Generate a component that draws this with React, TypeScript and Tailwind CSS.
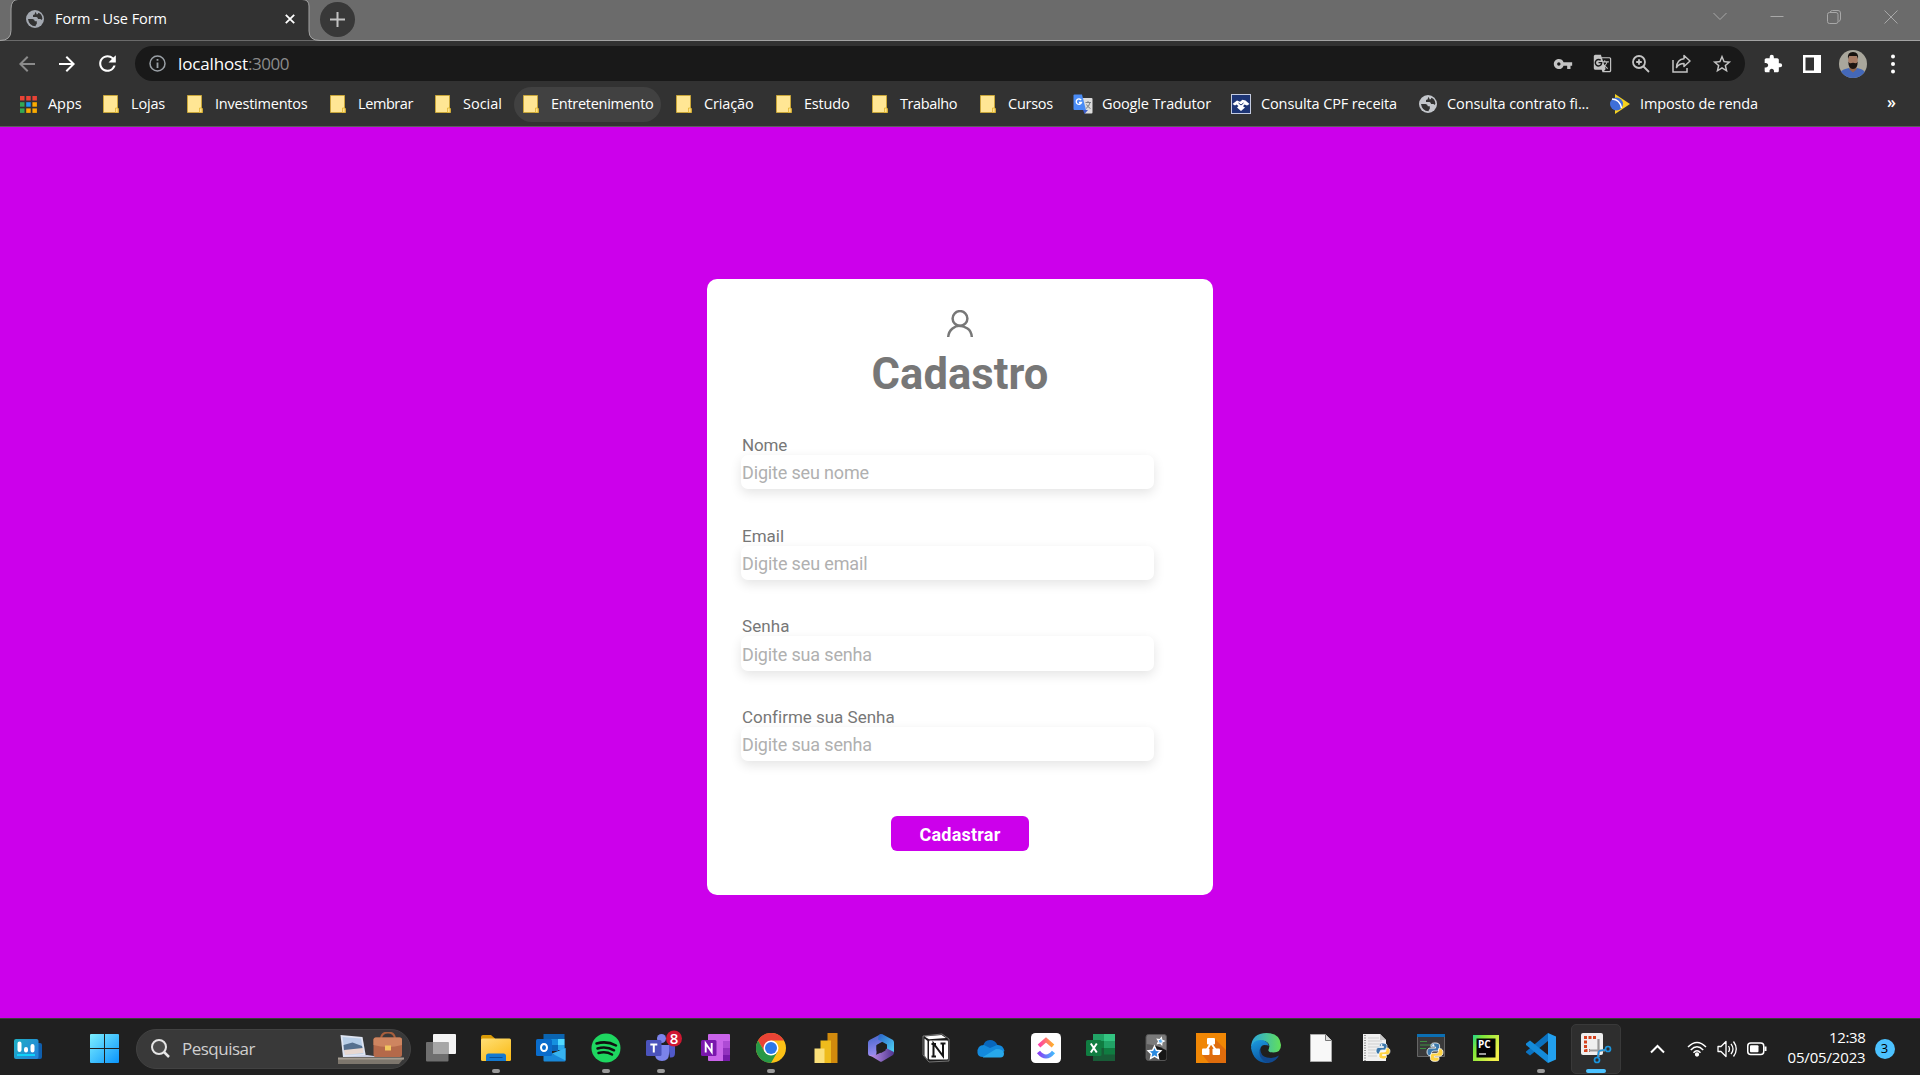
import React, { useLayoutEffect, useRef } from "react";
import { MdVpnKey, MdGTranslate, MdStarBorder, MdExtension, MdArrowBack, MdArrowForward, MdRefresh } from "react-icons/md";

/* Text whose tracking is adjusted so that the run takes the given width. */
function Fit({ w, className = "", children }: { w: number; className?: string; children: string }) {
  const ref = useRef<HTMLSpanElement>(null);
  useLayoutEffect(() => {
    const el = ref.current;
    if (!el) return;
    el.style.letterSpacing = "0px";
    const natural = el.getBoundingClientRect().width;
    el.style.letterSpacing = `${(w - natural) / children.length}px`;
  }, [w, children]);
  return (
    <span ref={ref} className={`inline-block shrink-0 whitespace-pre ${className}`}>
      {children}
    </span>
  );
}

const Folder = () => (
  <svg width="16" height="18" viewBox="0 0 16 18">
    <path d="M.5.5h14v12.500l1 1v3.500H.5z" fill="#ffe694" stroke="#c9a63a" />
    <path d="M12.500 17.500v-4.500h2.500v4.500z" fill="#ffe28a" stroke="#e0b52f" strokeWidth=".8" />
  </svg>
);

const AppsIcon = () => (
  <svg width="17" height="17" viewBox="0 0 17 17">
    {["#ea4335", "#ea4335", "#ea4335", "#34a853", "#2196f3", "#fbab00", "#34a853", "#fbab00", "#fbab00"].map((c, i) => (
      <rect key={i} x={(i % 3) * 6.2} y={Math.floor(i / 3) * 6.2} width="4.500" height="4.500" fill={c} />
    ))}
  </svg>
);

const Globe = ({ color }: { color: string }) => (
  <svg width="18" height="18" viewBox="0 0 18 18">
    <circle cx="9" cy="9" r="9" fill={color} />
    <path d="M2 9h4.500q2.300.3 2.300 2.300h2V14q-1 .4-1.300 2.200Q3 16 2 9z" fill="#323232" />
    <path d="M9.800 2q-1.300 1-1 2.200l-1.800.8v2h3.500q1.500.3 1.500 2h2.200q.8 0 1.300 1l.9-1.200Q16 4 12.300 2.800q0 1.700-1.600 1.700z" fill="#323232" />
  </svg>
);

const TranslateIcon = () => (
  <svg width="20" height="20" viewBox="0 0 20 20">
    <path d="M8 4h10.500q1 0 1 1v13.500q0 1-1 1H12z" fill="#dcdcdc" />
    <path d="M10 16h5l-3.500 4z" fill="#3a5bc7" />
    <path d="M1.500.5h7.500l4 15.500H1.500q-1 0-1-1v-13.500q0-1 1-1z" fill="#4a8cf6" />
    <path d="M8.200 6.200a2.700 2.700 0 1 0 .3 2.300H6" stroke="#fff" strokeWidth="1.300" fill="none" />
    <path d="M12.500 8.500h5.500M15 7v1.500M17 8.500q-.8 4-4 6M13.500 10.500q1.500 3 4 4" stroke="#7a7f86" fill="none" />
  </svg>
);

const ReceitaIcon = () => (
  <svg width="20" height="20" viewBox="0 0 20 20">
    <rect x=".5" y=".5" width="19" height="19" fill="#1d3575" stroke="#c3cbe0" />
    <path d="M1.500 10 6 6.500l3 1.200 2.500-1.900 3 .7L18.500 10 16 11.500l-2.500-1-1.500 1.800 2 1.200-4 3.500-4-3.500 1.500-1.500-2-1.500-1.500 1z" fill="#fff" />
    <path d="m7.500 9 2.500 2L12.500 9" stroke="#1d3575" fill="none" />
  </svg>
);

const ImpostoIcon = () => (
  <svg width="20" height="20" viewBox="0 0 20 20">
    <path d="M5 0 20 10 5 20z" fill="#f7d21e" />
    <circle cx="6.500" cy="10" r="6.500" fill="#3f6fd8" />
    <path d="M2 5q8 .5 9.500 9" stroke="#fff" strokeWidth="1.500" fill="none" />
  </svg>
);

const bookmarks: { t: string; w: number; cls: string; slot: string; icon: React.ReactNode }[] = [
  { t: "Apps", w: 33.5, cls: "w-[83px]", slot: "w-7", icon: <AppsIcon /> },
  { t: "Lojas", w: 34, cls: "w-[84px]", slot: "w-7", icon: <Folder /> },
  { t: "Investimentos", w: 92.5, cls: "w-[143px]", slot: "w-7", icon: <Folder /> },
  { t: "Lembrar", w: 55, cls: "w-[105px]", slot: "w-7", icon: <Folder /> },
  { t: "Social", w: 39, cls: "w-[88px]", slot: "w-7", icon: <Folder /> },
  { t: "Entretenimento", w: 102.5, cls: "w-[153px]", slot: "w-7", icon: <Folder /> },
  { t: "Criação", w: 49.5, cls: "w-[100px]", slot: "w-7", icon: <Folder /> },
  { t: "Estudo", w: 45.5, cls: "w-[96px]", slot: "w-7", icon: <Folder /> },
  { t: "Trabalho", w: 57, cls: "w-[108px]", slot: "w-7", icon: <Folder /> },
  { t: "Cursos", w: 45, cls: "w-[93px]", slot: "w-7", icon: <Folder /> },
  { t: "Google Tradutor", w: 109, cls: "w-[158px]", slot: "w-[29px]", icon: <TranslateIcon /> },
  { t: "Consulta CPF receita", w: 136, cls: "w-[188px]", slot: "w-[30px]", icon: <ReceitaIcon /> },
  { t: "Consulta contrato fi...", w: 142, cls: "w-[191px]", slot: "w-[28px]", icon: <Globe color="#c4c7cc" /> },
  { t: "Imposto de renda", w: 118, cls: "w-[277px]", slot: "w-[30px]", icon: <ImpostoIcon /> },
];

function TabStrip() {
  return (
    <div className="flex h-[41px] shrink-0 items-start justify-between bg-[#6b6b6b] shadow-[inset_0_-1px_0_#a3a3a3]">
      <div className="flex">
        <svg width="320" height="41" viewBox="0 0 320 41" className="-mr-[320px]">
          <path d="M0 41v-.5q11 0 11-10V9Q11-.5 18-.5H302Q309-.5 309 6V31q0 9.500 11 9.500v.5z" fill="#323232" stroke="#a3a3a3" />
        </svg>
        <div className="relative flex h-[38px] w-[319px] items-center pl-[26px]">
          <Globe color="#a3a8b0" />
          <Fit w={112} className="ml-[11px] text-[14.500px] text-white">Form - Use Form</Fit>
          <svg width="10" height="10" viewBox="0 0 10 10" className="ml-[118px]">
            <path d="m.8.8 8.400 8.400M9.200.8.8 9.200" stroke="#fff" strokeWidth="1.800" />
          </svg>
        </div>
        <div className="mt-[2px] ml-[1px] flex size-[35px] items-center justify-center rounded-full bg-[#383838]">
          <svg width="15" height="15" viewBox="0 0 15 15">
            <path d="M7.500 0v15M0 7.500h15" stroke="#c2c2c2" strokeWidth="2" />
          </svg>
        </div>
      </div>
      <div className="flex items-center gap-[43px] pt-[10px] pr-[22px]">
        <svg width="14" height="14" viewBox="0 0 14 14"><path d="m.5 3 6.500 6.500L13.500 3" stroke="#a8a8a8" fill="none" /></svg>
        <svg width="14" height="14" viewBox="0 0 14 14"><path d="M.5 6.500h13" stroke="#a8a8a8" /></svg>
        <svg width="14" height="14" viewBox="0 0 14 14" fill="none" stroke="#a8a8a8">
          <rect x=".5" y="2.500" width="10.500" height="11" rx="2" />
          <path d="M3 2.500Q3.500.5 5.500.5H11q2.500 0 2.500 2.500v6q0 2-2 2.500" />
        </svg>
        <svg width="14" height="14" viewBox="0 0 14 14"><path d="m.5.5 13 13M13.500.5l-13 13" stroke="#a8a8a8" /></svg>
      </div>
    </div>
  );
}

function Toolbar() {
  return (
    <div className="flex h-[45px] shrink-0 items-center bg-[#323232]">
      <div className="flex w-[135px] items-center gap-[16px] pl-[15px]">
        <MdArrowBack size={24} color="#8b8b8b" />
        <MdArrowForward size={24} color="#fff" />
        <MdRefresh size={25} color="#fff" />
      </div>
      <div className="flex h-[35px] w-[1610px] items-center rounded-full bg-[#191919] pl-[14px]">
        <svg width="17" height="17" viewBox="0 0 17 17" fill="none" stroke="#9aa0a6" strokeWidth="1.500">
          <circle cx="8.500" cy="8.500" r="7.500" />
          <path d="M8.500 7.500V13M8.500 4v1.800" strokeWidth="1.800" />
        </svg>
        <Fit w={70} className="ml-[12px] text-[17px] text-white">localhost</Fit>
        <Fit w={41} className="text-[17px] text-[#8b8b8b]">:3000</Fit>
        <div className="ml-auto flex items-center gap-[20px] pr-[12px] text-[#c4c4c4]">
          <MdVpnKey size={20} />
          <MdGTranslate size={19} />
          <svg width="18" height="18" viewBox="0 0 18 18" fill="none" stroke="currentColor" strokeWidth="1.800">
            <circle cx="7" cy="7" r="6" />
            <path d="m11.500 11.500 5.500 5.500M7 4.200v5.600M4.200 7h5.600" />
          </svg>
          <svg width="19" height="19" viewBox="0 0 19 19" fill="none" stroke="currentColor" strokeWidth="1.500" className="ml-[2px]">
            <path d="M1 6v12h14v-4" />
            <path d="M12 1.500 18 7l-6 5.500V9.500q-5 0-7.500 4Q5 5.500 12 4.800z" strokeLinejoin="round" />
          </svg>
          <MdStarBorder size={22} />
        </div>
      </div>
      <div className="flex items-center pl-[18px]">
        <MdExtension size={20} color="#fff" />
        <svg width="18" height="18" viewBox="0 0 18 18" className="ml-[20px]">
          <path d="M0 0h18v18H0zM2.500 2.500v13h8.500v-13z" fill="#fff" fillRule="evenodd" />
        </svg>
        <svg width="28" height="28" viewBox="0 0 28 28" className="ml-[18px]">
          <clipPath id="avatar"><circle cx="14" cy="14" r="14" /></clipPath>
          <g clipPath="url(#avatar)">
            <rect width="28" height="28" fill="#a9a79c" />
            <path d="M1 28V22q3-3 9-4l4 4 4-4q6 1 8 4v6z" fill="#4468b8" />
            <path d="M10.500 14h7v5.500l-3.500 3-3.500-3z" fill="#8e6650" />
            <ellipse cx="14" cy="10" rx="4.800" ry="6.500" fill="#a67a63" />
            <path d="M9 9q-1-7 5-7t5 7l-1.200-3h-7.600z" fill="#17120f" />
            <path d="M9.300 11.500q.7 2 2.200 1.700 2.500-1 5 0 1.500.3 2.200-1.700 0 7.500-4.700 7.500t-4.700-7.500z" fill="#1d1512" />
          </g>
        </svg>
        <svg width="4" height="20" viewBox="0 0 4 20" className="ml-[24px]" fill="#fff">
          <circle cx="2" cy="2.500" r="2" /><circle cx="2" cy="10" r="2" /><circle cx="2" cy="17.500" r="2" />
        </svg>
      </div>
    </div>
  );
}

function BookmarksBar() {
  return (
    <div className="flex h-[41px] shrink-0 items-center border-b border-[#5c5c5c] bg-[#323232] pb-[4px] pl-[20px] text-[14.500px] text-white">
      {bookmarks.map((b) => (
        <div key={b.t} className={`relative flex h-[35px] shrink-0 items-center ${b.cls}`}>
          {b.t === "Entretenimento" && <div className="absolute inset-y-0 -left-[9px] w-[147px] rounded-full bg-[#414141]" />}
          <div className={`relative shrink-0 ${b.slot}`}>{b.icon}</div>
          <Fit w={b.w} className="relative">{b.t}</Fit>
        </div>
      ))}
      <span className="-mt-[4px] text-[16px] font-semibold">»</span>
    </div>
  );
}

const fields = [
  ["Nome", 45, "Digite seu nome", 127],
  ["Email", 42, "Digite seu email", 125.5],
  ["Senha", 47.5, "Digite sua senha", 130],
  ["Confirme sua Senha", 152, "Digite sua senha", 130],
] as const;

function FormCard() {
  return (
    <main className="flex h-[891px] shrink-0 justify-center bg-[#cc00eb] pt-[152px]">
      <form className="flex h-[616px] w-[506px] flex-col items-center rounded-[10px] bg-white pt-[31px] font-['Roboto',sans-serif]">
        <svg width="28" height="28" viewBox="0 0 28 28" fill="none" stroke="#777" strokeWidth="2.500">
          <circle cx="14" cy="8.500" r="7.400" />
          <path d="M2.200 27q.5-5.500 4.300-8.500T14 15.800t7.500 2.700 4.300 8.500" />
        </svg>
        <h1 className="mt-[11px] h-[51px] text-[43.500px] leading-[51px] font-bold text-[#777]"><Fit w={177}>Cadastro</Fit></h1>
        <div className="mt-[34px] flex w-full flex-col pl-[34px]">
          {fields.map(([label, lw, ph, pw]) => (
            <div key={label} className="flex h-[90.700px] flex-col">
              <label className="h-[21px] pl-[1px] text-[17px] leading-[22px] text-[#777]"><Fit w={lw}>{label}</Fit></label>
              <div className="flex h-[34.300px] w-[413px] items-center rounded-[7px] bg-white pt-[1px] pl-[1px] text-[18px] text-[#b0b0b0] shadow-[0_4px_12px_rgba(0,0,0,0.11)]">
                <Fit w={pw}>{ph}</Fit>
              </div>
            </div>
          ))}
        </div>
        <button type="button" className="mt-[19px] flex h-[35px] w-[138px] items-center justify-center rounded-[6px] bg-[#cc00eb] pt-[2px] text-[18px] font-bold text-white">
          <Fit w={81}>Cadastrar</Fit>
        </button>
      </form>
    </main>
  );
}

const Explorer = () => (
  <svg width="30" height="30" viewBox="0 0 30 30">
    <path d="M0 4q0-2 2-2h8l4 3.500v5H0z" fill="#d99a06" />
    <rect y="5.500" width="30" height="22.500" rx="1.500" fill="url(#fold)" />
    <path d="M5 28v-5q0-2.500 2.500-2.500h15q2.500 0 2.500 2.500v5z" fill="#1479d0" />
    <path d="M8.500 24.500h13" stroke="#0a4f94" />
    <defs><linearGradient id="fold" x2=".7" y2="1"><stop stopColor="#ffdf75" /><stop offset="1" stopColor="#fbbd1c" /></linearGradient></defs>
  </svg>
);
const Outlook = () => (
  <svg width="30" height="30" viewBox="0 0 30 30">
    <path d="M7.500 1h21v16h-21z" fill="#0a64b0" />
    <path d="M15 6h7v6h-7z" fill="#1490df" /><path d="M22 6h6.500v6H22z" fill="#50d9ff" /><path d="M15 12h7v6h-7z" fill="#0a64b8" /><path d="M22 12h6.500v5H22z" fill="#28a8ea" />
    <path d="M7.500 15 18 21.500 29.500 15v12.500q0 1-1 1h-20q-1 0-1-1z" fill="#1988d9" />
    <path d="M29.500 15v12.500L16 20.500z" fill="#36b3f0" />
    <rect x="0" y="6" width="16" height="17" rx="1.500" fill="#0a6ccb" />
    <ellipse cx="8" cy="14.500" rx="3" ry="3.600" fill="none" stroke="#fff" strokeWidth="2" />
  </svg>
);
const Spotify = () => (
  <svg width="30" height="30" viewBox="0 0 30 30">
    <circle cx="15" cy="15" r="14.500" fill="#1ed760" />
    <path d="M5.500 10.500q10.500-3 19.500 2M6.500 15.500q9-2.500 16.500 1.800M7.500 20q7.500-2 13.500 1.500" stroke="#111" strokeWidth="2.500" strokeLinecap="round" fill="none" />
  </svg>
);
const Teams = () => (
  <svg width="36" height="32" viewBox="-3 -1 36 32" className="overflow-visible">
    <circle cx="15.500" cy="5.500" r="4.500" fill="#7b83eb" />
    <path d="M22 12h7v8q0 5-5 4.500z" fill="#5059c9" />
    <path d="M9 12h14v9q0 7-7 7t-7-7z" fill="#7b83eb" />
    <rect y="7" width="15.500" height="16" rx="1.500" fill="#4b53bc" />
    <path d="M4.300 11.500h7M7.800 11.500v8" stroke="#fff" strokeWidth="2" />
    <circle cx="28" cy="5.500" r="8" fill="#cf1732" />
    <text x="28" y="11" textAnchor="middle" fontSize="15" fontWeight="600" fill="#fff" fontFamily="Open Sans, sans-serif">8</text>
  </svg>
);
const OneNote = () => (
  <svg width="30" height="30" viewBox="0 0 30 30">
    <rect x="7" y="1" width="22" height="27" rx="1" fill="#ca64ea" />
    <path d="M22 8h7v7h-7z" fill="#ae4bd5" /><path d="M22 15h7v6.500h-7z" fill="#9332bf" /><path d="M22 21.500h7V28h-7z" fill="#7719aa" />
    <rect y="7" width="15.500" height="16" rx="1.500" fill="#7a17ad" />
    <path d="M4.700 19.500v-9l6 8.500v-9" stroke="#fff" strokeWidth="1.900" fill="none" />
  </svg>
);
const Chrome = () => (
  <svg width="30" height="30" viewBox="0 0 30 30">
    <circle cx="15" cy="15" r="15" fill="#fbc116" />
    <path d="M2 7.500A15 15 0 0 1 28 7.500H15L8.500 18.700z" fill="#ea4335" />
    <path d="M2 7.500 8.500 18.700Q12 23 21.500 18.700L15 30A15 15 0 0 1 2 7.500z" fill="#279847" />
    <circle cx="15" cy="15" r="7.500" fill="#fff" /><circle cx="15" cy="15" r="6" fill="#2b78ea" />
  </svg>
);
const PowerBI = () => (
  <svg width="30" height="30" viewBox="0 0 30 30">
    <path d="M16.500 0h10v30h-10z" fill="#d18a0d" /><path d="M9.500 7.500h10.500V30H9.500z" fill="#eebb1c" /><path d="M3.500 15.500h10V30h-10z" fill="#fbe07a" />
  </svg>
);
const M365 = () => (
  <svg width="30" height="30" viewBox="0 0 30 30">
    <defs>
      <linearGradient id="m1" x2=".2" y2="1"><stop stopColor="#3f63c9" /><stop offset="1" stopColor="#9a8cf0" /></linearGradient>
      <linearGradient id="m2" x2="1" y2="1"><stop stopColor="#2a5fc8" /><stop offset="1" stopColor="#50d8f5" /></linearGradient>
      <linearGradient id="m3" x2="1" y2="0"><stop stopColor="#c79af2" /><stop offset="1" stopColor="#4f358f" /></linearGradient>
    </defs>
    <path d="M15 1 3.500 7Q2 8 2 9.500v11q0 2 2 2.500 6 1 6.500-3V12l8-4.500z" fill="url(#m1)" />
    <path d="M13 1.800 16 1l11 6q1 1 1 2.500V20l-7-3v-5.500l-9-5z" fill="url(#m2)" />
    <path d="M2.500 21.500 14 28.500q1 .5 2 0L27 22q1-1 1-3l-7-3.500-8 5q-5 3-10.500 1z" fill="url(#m3)" />
    <path d="m15 10 4.500 2.500v5L15 20l-4.500-2.500v-5z" fill="#202020" />
  </svg>
);
const Notion = () => (
  <svg width="30" height="30" viewBox="0 0 30 30">
    <path d="m2 3 19-2 7 5v22l-20 1-6-7z" fill="#1b1b1b" stroke="#999" strokeWidth=".7" strokeLinejoin="round" />
    <path d="m3.500 3.500 17-1.500L25 5 8 6.200z" fill="#fff" /><path d="M3.500 5.500 6.500 8v18.500l-3-4z" fill="#fff" />
    <rect x="8" y="7.500" width="19" height="19" rx="1" fill="#fff" />
    <path d="M12.500 23.500v-13l9.500 12.500V10M10.500 11h4.500M10.500 23.500h4.500M19.500 10.500h5" stroke="#151515" strokeWidth="2" fill="none" />
  </svg>
);
const OneDrive = () => (
  <svg width="30" height="30" viewBox="0 0 30 30">
    <path d="M7 14Q8 7 14 7q5 0 7.500 5l-4 6H4z" fill="#0867bd" />
    <path d="M1.500 20Q1 12 8 12l6 3 7-3q6-.5 7.500 6L20 24H7q-5 0-5.500-4z" fill="#1389dc" />
    <path d="M7 24 20 16q8 0 8 4.500T23.500 24.500H7z" fill="#28a8ea" />
  </svg>
);
const ClickUp = () => (
  <svg width="30" height="30" viewBox="0 0 30 30" fill="none" strokeWidth="4">
    <defs>
      <linearGradient id="c1"><stop stopColor="#ff3cac" /><stop offset="1" stopColor="#ffb02e" /></linearGradient>
      <linearGradient id="c2"><stop stopColor="#8a3df5" /><stop offset="1" stopColor="#45b8fb" /></linearGradient>
    </defs>
    <rect width="30" height="30" rx="4.500" fill="#fff" />
    <path d="m8 13 7-6 7 6" stroke="url(#c1)" /><path d="M7.500 19q7.500 9 15 0" stroke="url(#c2)" />
  </svg>
);
const Excel = () => (
  <svg width="30" height="30" viewBox="0 0 30 30">
    <path d="M7 1h11v7H7z" fill="#21a366" /><path d="M18 1h11v7H18z" fill="#33c481" /><path d="M7 8h11v7H7z" fill="#107c41" /><path d="M18 8h11v7H18z" fill="#21a366" />
    <path d="M7 15h22v13H7z" fill="#185c37" /><path d="M18 15h11v6.500H18z" fill="#107c41" />
    <rect y="7" width="15.500" height="16" rx="1.500" fill="#107c41" />
    <path d="m4.800 10.500 6 9M10.800 10.500l-6 9" stroke="#fff" strokeWidth="2" />
  </svg>
);
const star = "m0-6 1.800 3.900 4.200.5-3.100 2.900.8 4.200L0 3.400l-3.700 2.100.8-4.200L-6-1.600l4.200-.5z";
const Anki = () => (
  <svg width="30" height="30" viewBox="0 0 30 30">
    <rect x="5" y="1.500" width="20.500" height="26" rx="2.500" fill="#7a7a7a" stroke="#555" />
    <path d="M5.500 11q10 1 20 6v8q0 2-2 2h-16q-2 0-2-2z" fill="#5c5c5c" /><path d="M13 12.500q6 1 12.500 5V25q0 2-2 2h-5z" fill="#161616" />
    <path d={star} transform="translate(13.500 19.500) scale(1.05)" fill="#2b8be0" stroke="#fff" strokeWidth="1.400" />
    <path d={star} transform="translate(19.500 8) rotate(15) scale(.6)" fill="#5caeee" stroke="#fff" strokeWidth="1.800" />
  </svg>
);
const DrawIo = () => (
  <svg width="30" height="30" viewBox="0 0 30 30">
    <path d="M0 0h30v30H0z" fill="#f08705" /><path d="m19 6 11 11v13H13l-7-8.500 8-7.500z" fill="#df6c0c" />
    <path d="M15 10 10 18M15 10l5.500 8" stroke="#fff" strokeWidth="2" />
    <g fill="#fff"><rect x="11" y="5" width="8" height="6.500" rx="1" /><rect x="6" y="15.500" width="7.500" height="6.500" rx="1" /><rect x="16.500" y="15.500" width="7.500" height="6.500" rx="1" /></g>
  </svg>
);
const Edge = () => (
  <svg width="30" height="30" viewBox="0 0 30 30">
    <defs>
      <linearGradient id="e1"><stop stopColor="#2aa5e0" /><stop offset="1" stopColor="#62e05a" /></linearGradient>
      <linearGradient id="e2" x2=".3" y2="1"><stop stopColor="#1b9de2" /><stop offset="1" stopColor="#0c59a4" /></linearGradient>
    </defs>
    <path d="M0 14Q1 0 15.500 0 29 0 30 12q0 7.500-7.500 7.500-6 0-5-3.500 2-3-.5-6Q11 4 0 14z" fill="url(#e1)" />
    <path d="M0 15Q2 6.500 10 7q7 .5 8 6.500-7-4-9 3-1 7 9.500 13.500Q3 31 0 15z" fill="url(#e2)" />
    <path d="M9.500 14q-1 9 6.500 10.500 7 1.500 12-2-4 7.500-12 7.500Q5.500 25 9.500 14z" fill="#11498f" />
    <path d="M17.500 12.500q1 2.500-.5 4.500-.8 3.500 5 3.500-3 2.500-6.500 1.500-4-1.500-3.500-6 1.500-4 5.500-3.500z" fill="#202020" />
  </svg>
);
const FileIcon = () => (
  <svg width="30" height="30" viewBox="0 0 30 30">
    <path d="M4.500 1.500h15l6 6v21h-21z" fill="#f8f8f8" stroke="#aaa" /><path d="M19.500 1.500v6h6" fill="#ddd" stroke="#777" />
  </svg>
);
const snake = "M0-7c-4 0-3.500 2-3.500 3.500H.5v1h-5C-7.500-2.500-8 4-4.500 4H-3V1.500Q-3 0-1 0h3q2 0 2-2v-2.500Q4-7 0-7z";
const PyLogo = ({ x, y }: { x: number; y: number }) => (
  <g transform={`translate(${x} ${y})`} strokeWidth=".7" stroke="#fff">
    <path d={snake} fill="#3b78ab" /><path d={snake} transform="rotate(180) translate(0 -2)" fill="#ffd342" />
    <circle cx="-1.500" cy="-5" r=".7" fill="#fff" />
  </g>
);
const PyFile = () => (
  <svg width="30" height="30" viewBox="0 0 30 30">
    <path d="M2 1h17l6 6v21H2z" fill="#f0f0f0" /><path d="M19 1v6h6" fill="#c8c8c8" />
    <path d="M4 2v26" stroke="#777" strokeDasharray="1 1.500" strokeWidth="1.500" />
    <path d="M7 5h11M7 8h14M7 11h15M7 14h14M7 17h9M7 20h8M7 23h9" stroke="#cfcfcf" />
    <PyLogo x={22} y={17} />
  </svg>
);
const PyConsole = () => (
  <svg width="30" height="30" viewBox="0 0 30 30">
    <path d="M1.500 1.500h27v22h-27z" fill="#3a3a3a" stroke="#666" /><path d="M1 1h28v3H1z" fill="#0b6fb3" />
    <path d="M4 8.500h7M4 12h12M4 15.500h6" stroke="#3f8f42" strokeWidth="1.200" />
    <g transform="translate(19 18) scale(1.150)"><PyLogo x={0} y={0} /></g>
  </svg>
);
const PyCharm = () => (
  <svg width="30" height="30" viewBox="0 0 30 30">
    <defs><linearGradient id="p1" x2="1" y2=".6"><stop stopColor="#21d789" /><stop offset=".3" stopColor="#7ee83a" /><stop offset="1" stopColor="#f2f04a" /></linearGradient></defs>
    <rect x="2" y="2" width="26" height="26" fill="url(#p1)" /><rect x="5.500" y="5.500" width="19" height="19" fill="#050505" />
    <text x="7" y="15" fontSize="10" fontWeight="700" fill="#fff" fontFamily="Open Sans, sans-serif">PC</text><path d="M8 21h7" stroke="#fff" strokeWidth="1.200" />
  </svg>
);
const VSCode = () => (
  <svg width="30" height="30" viewBox="0 0 30 30">
    <path d="m22 0 8 3.500v23L22 30z" fill="#22a0ee" /><path d="M22 0v8L4 22.500 0 19.500v-1z" fill="#0b72c0" /><path d="M22 30v-8L4 7.500 0 10.500v1.500z" fill="#148bda" />
  </svg>
);
const Snip = () => (
  <svg width="30" height="30" viewBox="0 0 30 30" className="overflow-visible">
    <rect width="22" height="22" rx="2" fill="#efefef" />
    <path d="M15 4.500H4.500v13H9" stroke="#d5421e" strokeWidth="3" strokeDasharray="3 1.500" fill="none" />
    <path d="M17.500 6v18M8 17.500h16" stroke="#999" strokeWidth="2.200" />
    <circle cx="27" cy="16" r="2.500" fill="none" stroke="#1b96de" strokeWidth="1.700" /><circle cx="16" cy="27" r="2.500" fill="none" stroke="#1b96de" strokeWidth="1.700" />
    <path d="m18 18 6.500-1.500M18 18l-1.500 6.500" stroke="#1b96de" strokeWidth="1.500" />
  </svg>
);
const TaskView = () => (
  <svg width="30" height="30" viewBox="0 0 30 30">
    <rect x="7" y="1" width="23" height="20" rx="1" fill="#f4f4f4" /><rect x="0" y="9" width="22.500" height="19.500" rx="1" fill="#6f6f6f" />
    <path d="M7 9h15.500v12H7z" fill="#a6a6a6" />
  </svg>
);

const tasks: { n: string; icon: React.ReactNode; run?: boolean; active?: boolean }[] = [
  { n: "Task view", icon: <TaskView /> },
  { n: "Explorer", icon: <Explorer />, run: true },
  { n: "Outlook", icon: <Outlook /> },
  { n: "Spotify", icon: <Spotify />, run: true },
  { n: "Teams", icon: <Teams />, run: true },
  { n: "OneNote", icon: <OneNote /> },
  { n: "Chrome", icon: <Chrome />, run: true },
  { n: "Power BI", icon: <PowerBI /> },
  { n: "Microsoft 365", icon: <M365 /> },
  { n: "Notion", icon: <Notion /> },
  { n: "OneDrive", icon: <OneDrive /> },
  { n: "ClickUp", icon: <ClickUp /> },
  { n: "Excel", icon: <Excel /> },
  { n: "Anki", icon: <Anki /> },
  { n: "draw.io", icon: <DrawIo /> },
  { n: "Edge", icon: <Edge /> },
  { n: "File", icon: <FileIcon /> },
  { n: "Python file", icon: <PyFile /> },
  { n: "Python IDLE", icon: <PyConsole /> },
  { n: "PyCharm", icon: <PyCharm /> },
  { n: "VS Code", icon: <VSCode />, run: true },
  { n: "Snipping tool", icon: <Snip />, active: true },
];

function Taskbar() {
  return (
    <footer className="flex h-[57px] shrink-0 items-center border-t border-[#3c4038] bg-[#202020] pt-[3px]">
      <svg width="28" height="20" viewBox="0 0 28 20" className="ml-[14px] shrink-0">
        <rect x="10" y="4" width="18" height="16" rx="2" fill="#0f5fae" /><rect width="24.500" height="20" rx="2" fill="url(#wd)" />
        <path d="M5.500 4.500v6.500M12 10v1.500M18.500 7v4.500" stroke="#fff" strokeWidth="4" strokeLinecap="round" /><path d="M3 16h18" stroke="#10d2fa" strokeWidth="2" />
        <defs><linearGradient id="wd" x2="1" y2=".6"><stop stopColor="#1fb0c4" /><stop offset="1" stopColor="#2387d8" /></linearGradient></defs>
      </svg>
      <svg width="29" height="29" viewBox="0 0 29 29" className="ml-[48px] shrink-0">
        <path d="M1 0h13v14H0V1q0-1 1-1zM15 0h13q1 0 1 1v13H15zM0 15h14v14H1q-1 0-1-1zM15 15h14v13q0 1-1 1H15z" fill="url(#win)" />
        <defs><linearGradient id="win" x2="1" y2="1"><stop stopColor="#7df0ff" /><stop offset="1" stopColor="#0a94fb" /></linearGradient></defs>
      </svg>
      <div className="ml-[17px] flex h-[40px] w-[275px] shrink-0 items-center rounded-full border border-[#424242] bg-[#393939] pl-[14px]">
        <svg width="19" height="19" viewBox="0 0 19 19" fill="none" stroke="#e6e6e6" strokeWidth="2"><circle cx="8" cy="8" r="7" fill="#4c4c4c" /><path d="m13 13 5 5" strokeWidth="2.500" /></svg>
        <Fit w={73} className="ml-[12px] text-[17px] text-[#cfcfcf]">Pesquisar</Fit>
        <svg width="66" height="33" viewBox="0 0 66 33" className="ml-[83px]">
          <path d="M0 26h66l-5 6H0z" fill="#7d766d" /><path d="M0 25.500h66v2H0z" fill="#a59d92" />
          <path d="m2.500 3 22 2L28 25H5z" fill="#dfe5f2" /><path d="m4.500 5 18.500 1.500L25.500 22 7 23z" fill="#b9cfe8" /><path d="m5.500 13 9-2.500 9.500 3.500 1 4-19 1z" fill="#55708f" /><path d="m6 18 19-2 .5 5L7 23z" fill="#e8d8d0" />
          <path d="M5 25h38l-14-2z" fill="#c9cee2" />
          <path d="M43 6q1-5.500 7-5.500T57 6" stroke="#a85f3d" strokeWidth="2" fill="none" />
          <rect x="35.500" y="5.500" width="28.500" height="19.500" rx="2" fill="#b4694a" /><path d="M35.500 8q0-2.500 2.500-2.500h23.500q2.500 0 2.500 2.500v5q-14 4-28.500 0z" fill="#ce8560" /><rect x="47" y="13.500" width="6" height="5" fill="#f1c65e" />
        </svg>
      </div>
      <div className="ml-[2.500px] flex">
        {tasks.map((t) => (
          <div key={t.n} className="relative flex h-[50px] w-[55px] items-center justify-center">
            {t.active && <div className="absolute inset-y-0 left-[2px] w-[50px] rounded-[5px] border border-[#393939] bg-[#2e2e2e]" />}
            <div className="relative -mt-[1px]">{t.icon}</div>
            {t.run && <div className="absolute bottom-[1px] left-[23.500px] h-[4px] w-[8px] rounded-full bg-[#9a9a9a]" />}
            {t.active && <div className="absolute bottom-[1px] left-[17.500px] h-[4px] w-[20px] rounded-full bg-[#4cc2ff]" />}
          </div>
        ))}
      </div>
      <div className="ml-[26.500px] flex flex-1 items-center text-white">
        <svg width="15" height="10" viewBox="0 0 15 10" fill="none" stroke="#fff" strokeWidth="2"><path d="m1 8.500 6.500-6.500L14 8.500" /></svg>
        <svg width="20" height="16" viewBox="0 0 20 16" fill="none" stroke="#fff" strokeWidth="1.500" className="ml-[22px]">
          <path d="M1 6q9-9 18 0M3.800 9Q10 2.500 16.200 9M6.500 11.700Q10 8 13.500 11.700" /><circle cx="10" cy="13.500" r="1.400" fill="#fff" />
        </svg>
        <svg width="20" height="18" viewBox="0 0 20 18" fill="none" stroke="#fff" strokeWidth="1.300" className="ml-[10px]">
          <path d="M1 6.500h3L9 1.500v15l-5-5H1z" strokeLinejoin="round" /><path d="M11.500 6q2 3 0 6M14 3.800q4 5.200 0 10.400M16.500 1.500q5.500 7.500 0 15" />
        </svg>
        <svg width="20" height="14" viewBox="0 0 20 14" className="ml-[10px]">
          <rect x=".75" y="1" width="16" height="11.500" rx="3" fill="none" stroke="#fff" strokeWidth="1.500" /><rect x="3" y="3.200" width="8.500" height="7" rx="1" fill="#fff" /><path d="M18.500 4.500v4.500" stroke="#fff" strokeWidth="2" />
        </svg>
        <div className="-mt-[3px] ml-[19.500px] flex w-[79px] flex-col items-end text-[15px] leading-[20px]">
          <Fit w={36.5}>12:38</Fit>
          <Fit w={78}>05/05/2023</Fit>
        </div>
        <div className="ml-[9px] flex size-[20px] items-center justify-center rounded-full bg-[#4cc2ff] text-[13px] text-black">3</div>
      </div>
    </footer>
  );
}

export default function App() {
  return (
    <div className="flex h-[1075px] w-[1920px] flex-col overflow-hidden font-['Open_Sans','Noto_Sans',sans-serif]">
      <TabStrip />
      <Toolbar />
      <BookmarksBar />
      <FormCard />
      <Taskbar />
    </div>
  );
}
